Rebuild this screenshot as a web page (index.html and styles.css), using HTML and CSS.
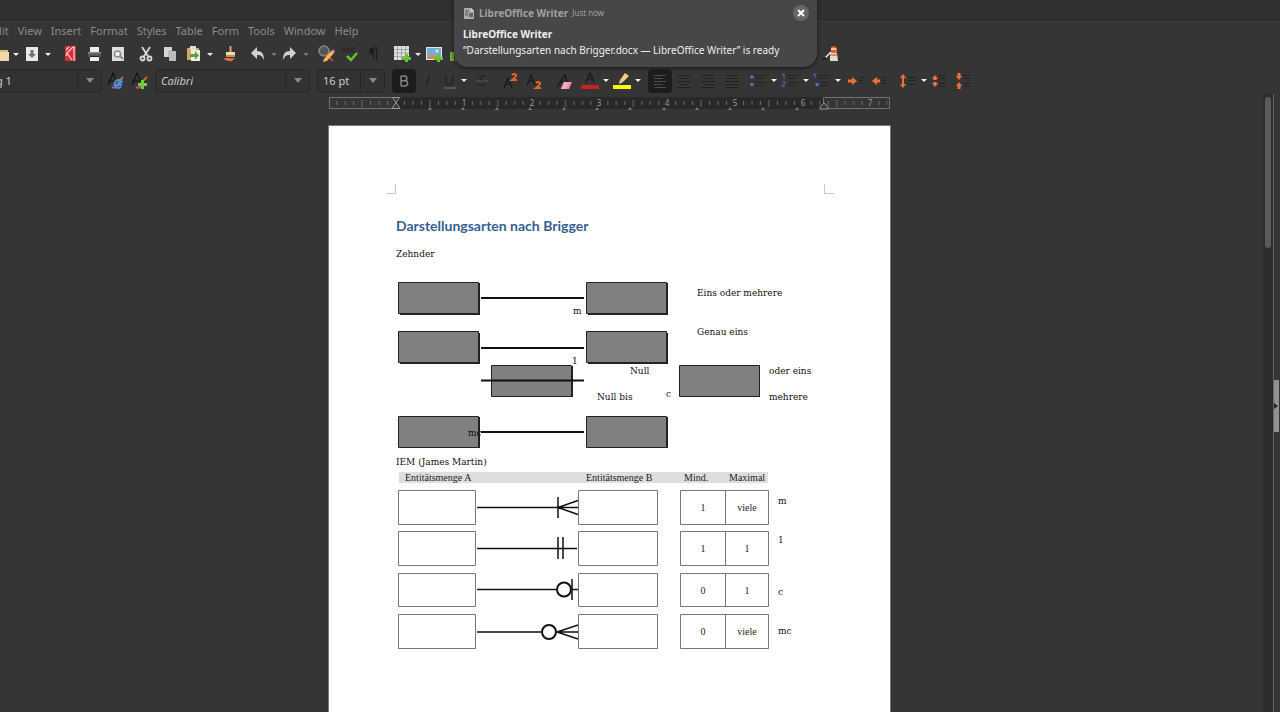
FILE: index.html
```html
<!DOCTYPE html>
<html lang="en">
<head>
<meta charset="utf-8">
<title>Darstellungsarten nach Brigger.docx — LibreOffice Writer</title>
<link rel="stylesheet" href="styles.css">
</head>
<body>
<header class="titlebar"></header>
<nav class="menubar" aria-label="Menu">
  <button>Edit</button><button>View</button><button>Insert</button><button>Format</button><button>Styles</button><button>Table</button><button>Form</button><button>Tools</button><button>Window</button><button>Help</button>
</nav>

<div class="toolbar standard" role="toolbar" aria-label="Standard">
  <button class="tool" aria-label="Open"><svg viewBox="0 0 18 18"><path d="M1 3h7l1 2h8v11H1z" fill="#d9b57c"/><path d="M1 7h17v9H1z" fill="#f4d9a8"/></svg></button>
  <button class="drop" aria-label="Open recent"></button>
  <button class="tool" aria-label="Save"><svg viewBox="0 0 18 18"><path d="M3 2h12v14H3z" fill="#e9e9e9"/><path d="M7.500 5h3v4h2.500L9 13 5 9h2.500z" fill="#707070"/></svg></button>
  <button class="drop" aria-label="Save options"></button>
  <i class="gap-large"></i>
  <button class="tool" aria-label="Export as PDF"><svg viewBox="0 0 18 18"><path d="M4 1h11v15H4z" fill="#d7303a"/><path d="M12 2 6 8l5 7M8 2 5 5M6 8l-1 3M13 1v15" fill="none" stroke="#f4d0d0" stroke-width="1.200"/></svg></button>
  <button class="tool" aria-label="Print"><svg viewBox="0 0 18 18"><path d="M5 2h9v5H5zM5 11h9v5H5z" fill="#ededed"/><path d="M3 7h13v5H3z" fill="#55585a"/><path d="M3 7h13v1.500H3z" fill="#858889"/><path d="M5 11h9v1H5z" fill="#202020"/></svg></button>
  <button class="tool" aria-label="Print preview"><svg viewBox="0 0 18 18"><path d="M3 2h12v14H3z" fill="#dedede"/><circle cx="8.500" cy="9" r="3" fill="#f1f1f1" stroke="#8a8a8a" stroke-width="1.500"/><path d="m11 11 3 3" stroke="#8a8a8a" stroke-width="2"/></svg></button>
  <i class="gap"></i>
  <button class="tool" aria-label="Cut"><svg viewBox="0 0 18 18" fill="none" stroke="#d8d8d8" stroke-width="1.800"><path d="m5 2 6.500 10M13 2 6.500 12"/><circle cx="5.500" cy="13.500" r="2"/><circle cx="12.500" cy="13.500" r="2"/></svg></button>
  <button class="tool" aria-label="Copy"><svg viewBox="0 0 18 18"><path d="M3 2h8v10H3z" fill="#d5d5d5"/><path d="M8 6h7v10H8z" fill="#bcbcbc"/><path d="M8 12V6h3" stroke="#aaa" fill="none"/></svg></button>
  <button class="tool" aria-label="Paste"><svg viewBox="0 0 18 18"><path d="M2 3h12v12H2z" fill="#d9a75c"/><path d="M5 1h6v4H5z" fill="#ddd"/><path d="M6 5h9v11H6z" fill="#ededeb"/><path d="M5 12V9h5V6l4 4.500-4 4V12z" fill="#56a532"/></svg></button>
  <button class="drop" aria-label="Paste options"></button>
  <i class="gap"></i>
  <button class="tool" aria-label="Clone formatting"><svg viewBox="0 0 18 18"><path d="M8.500 1h2v6h-2z" fill="#d7a960"/><path d="M5 7h9v4H5z" fill="#f4d9a8"/><path d="M5 10h9v2H5z" fill="#bb9360"/><path d="M2 14c4-2 7 0 12-1l-3 3c-3 1-6-1-9-2" fill="#e56b32"/></svg></button>
  <i class="gap"></i>
  <button class="tool" aria-label="Undo"><svg viewBox="0 0 18 18"><path d="m2 8 6-6v4c5 0 7 3 7 9-2-4-3-5-7-5v4z" fill="#d0d0d0"/></svg></button>
  <button class="drop dim" aria-label="Undo history"></button>
  <button class="tool" aria-label="Redo"><svg viewBox="0 0 18 18"><path d="m15 8-6-6v4c-5 0-7 3-7 9 2-4 3-5 7-5v4z" fill="#d0d0d0"/></svg></button>
  <button class="drop dim" aria-label="Redo history"></button>
  <i class="gap"></i>
  <button class="tool" aria-label="Find and replace"><svg viewBox="0 0 18 18"><circle cx="7" cy="6" r="5" fill="#555" stroke="#878787" stroke-width="1.500"/><path d="m10 10 6 6" stroke="#c44" stroke-width="2"/><path d="m7 14 7-8 3 2-7 8-4 1z" fill="#f0bd55"/><path d="m14 6 2-1.500 2 2L17 8z" fill="#f28ba5"/></svg></button>
  <button class="tool" aria-label="Spelling"><svg viewBox="0 0 18 18"><path d="M2 7V4l1.500-1L5 4v3M2 5.500h3M7 3v4h3V3zM12 3h3M12 7h3M12 3v4" fill="none" stroke="#262626"/><path d="m6 11 4 4 6-7" fill="none" stroke="#5fc52c" stroke-width="2.500"/></svg></button>
  <button class="tool" aria-label="Formatting marks"><svg viewBox="0 0 18 18"><path d="M8 3H7a3 3 0 0 0 0 6h1z" fill="#1d1d1d"/><path d="M7 3h7M8.500 3v12M11.500 3v12" stroke="#1d1d1d" stroke-width="1.200"/></svg></button>
  <i class="gap"></i>
  <button class="tool" aria-label="Insert table"><svg viewBox="0 0 18 18"><path d="M1 1h15v14H1z" fill="#e2e2e2"/><path d="M1 4.500h15M1 8h15M1 11.500h15M4.500 1v14M8.500 1v14M12.500 1v14" stroke="#999" stroke-width=".8"/><path d="M12 9h3v3h3v3h-3v2h-3v-2h-3v-3h3z" fill="#67c431"/></svg></button>
  <button class="drop" aria-label="Table size"></button>
  <button class="tool" aria-label="Insert image"><svg viewBox="0 0 18 18"><path d="M1 2h16v13H1z" fill="#e6e6e6"/><path d="M2 3h14v11H2z" fill="#73aede"/><path d="m2 14 5-5 3 3 2-2 4 4z" fill="#e98338"/><circle cx="12" cy="6" r="1.500" fill="#ffe88e"/><path d="M12 9h3v3h3v3h-3v2h-3v-2h-3v-3h3z" fill="#67c431"/></svg></button>
  <button class="tool" aria-label="Insert chart"><svg viewBox="0 0 18 18"><path d="M1 7h4v9H1z" fill="#67b52f"/><path d="M6 3h4v13H6z" fill="#de6b31"/><path d="M11 8h4v8h-4z" fill="#4a83c4"/></svg></button>
  <div class="covered-tools"></div>
  <button class="tool" aria-label="Draw functions"><svg viewBox="0 0 18 18"><path d="m8 2 3-1 3 2v5H8z" fill="#e7652d"/><path d="M8 3h5v2H8z" fill="#f5c6a5"/><path d="M7 8h7l1 8H7z" fill="#ddd"/><path d="M7 9h7v2H7z" fill="#e98853"/><path d="m1 14 7-7" stroke="#eee" stroke-width="1.500"/><path d="m0 14 3-1" stroke="#111" stroke-width="2"/></svg></button>
</div>

<div class="toolbar formatting" role="toolbar" aria-label="Formatting">
  <div class="combo style-combo"><input aria-label="Paragraph style" value="Heading 1"><button aria-label="Show styles"></button></div>
  <i class="gap-small"></i>
  <button class="tool" aria-label="Update style"><svg viewBox="0 0 18 18"><path d="M1 13 6 1l4 9M3 9h5" fill="none" stroke="#111" stroke-width="1.200"/><path d="m10 12 6-7" stroke="#c46b2b" stroke-width="2"/><path d="M5 15q3 2 5-1" stroke="#c44f8a" stroke-width="2" fill="none"/><path d="M14 15a4 4 0 1 1 1-5l-5 3h5" fill="none" stroke="#4b91e5" stroke-width="2"/></svg></button>
  <button class="tool" aria-label="New style"><svg viewBox="0 0 18 18"><path d="M1 13 6 1l4 9M3 9h5" fill="none" stroke="#111" stroke-width="1.200"/><path d="m10 11 6-6" stroke="#c46b2b" stroke-width="2"/><path d="M5 15q3 2 5-1" stroke="#c44f8a" stroke-width="2" fill="none"/><path d="M10 8h3v3h3v3h-3v3h-3v-3H7v-3h3z" fill="#72cf36"/></svg></button>
  <div class="combo font-combo"><input aria-label="Font name" value="Calibri"><button aria-label="Show fonts"></button></div>
  <div class="combo size-combo"><input aria-label="Font size" value="16 pt"><button aria-label="Show sizes"></button></div>
  <button class="tool active" aria-label="Bold"><svg viewBox="0 0 18 18" fill="none" stroke="#858585" stroke-width="1.500"><path d="M6 4v10M6 4h3.500a2.300 2.300 0 0 1 0 4.700H6h4a2.600 2.600 0 0 1 0 5.300H6"/></svg></button>
  <button class="tool" aria-label="Italic"><svg viewBox="0 0 18 18"><path d="M10.500 4 7 14" stroke="#222" stroke-width="1.200"/></svg></button>
  <button class="tool narrow" aria-label="Underline"><svg viewBox="0 0 18 18" fill="none" stroke="#222" stroke-width="1.300"><path d="M5 3v6a3.500 3.500 0 0 0 7 0V3"/><path d="M3 16h12" stroke="#666"/></svg></button>
  <button class="drop" aria-label="Underline options"></button>
  <i class="gap-small"></i>
  <button class="tool" aria-label="Strikethrough"><svg viewBox="0 0 18 18" fill="none" stroke="#222" stroke-width="1.200"><path d="M12 5C9 2 5 5 8 8l2 1c4 3-1 6-4 3"/><path d="M3 9h12" stroke="#555"/></svg></button>
  <i class="gap"></i>
  <button class="tool" aria-label="Superscript"><svg viewBox="0 0 18 18" fill="none"><path d="m3 16 4-10 4 10M5 12h5" stroke="#181818" stroke-width="1.200"/><path d="M11 3q2-2 4 0 0 2-4 5h5" stroke="#ec642b" stroke-width="2"/></svg></button>
  <button class="tool" aria-label="Subscript"><svg viewBox="0 0 18 18" fill="none"><path d="m2 13 4-10 4 10M4 9h5" stroke="#181818" stroke-width="1.200"/><path d="M11 11q2-2 4 0 0 2-4 5h5" stroke="#ec642b" stroke-width="2"/></svg></button>
  <i class="gap-large"></i>
  <button class="tool" aria-label="Clear formatting"><svg viewBox="0 0 18 18"><path d="m2 15 8-12 2 7M5 10h6" fill="none" stroke="#161616" stroke-width="1.200"/><path d="M9 10h8l-3 7H6z" fill="#f08bac"/><path d="m9 10-3 7h5l3-7z" fill="#f6abc2"/></svg></button>
  <i class="gap-small"></i>
  <button class="tool" aria-label="Font color"><svg viewBox="0 0 18 18"><path d="m5 10 4-9 4 9M6.500 7h5" fill="none" stroke="#181818" stroke-width="1.200"/><path d="M0 13h18v4H0z" fill="#c9211e"/></svg></button>
  <button class="drop" aria-label="Font colors"></button>
  <button class="tool" aria-label="Highlighting"><svg viewBox="0 0 18 18"><path d="m7 8 5-7 4 3-6 6z" fill="#f1ce78"/><path d="m7 8 3 2-4 2z" fill="#ddd"/><path d="M0 13h18v4H0z" fill="#fff800"/></svg></button>
  <button class="drop" aria-label="Highlight colors"></button>
  <i class="gap-large"></i>
  <button class="tool active" aria-label="Align left"><svg viewBox="0 0 18 18"><path d="M3 3.500h12M3 6.500h9M3 9.500h12M3 12.500h9M3 15.500h12" stroke="#4c4c4c"/></svg></button>
  <button class="tool" aria-label="Center"><svg viewBox="0 0 18 18"><path d="M2 3.500h14M5 6.500h8M2 9.500h14M5 12.500h8M2 15.500h14" stroke="#222"/></svg></button>
  <button class="tool" aria-label="Align right"><svg viewBox="0 0 18 18"><path d="M2 3.500h14M6 6.500h10M2 9.500h14M6 12.500h10M2 15.500h14" stroke="#222"/></svg></button>
  <button class="tool" aria-label="Justify"><svg viewBox="0 0 18 18"><path d="M2 3.500h14M2 6.500h14M2 9.500h14M2 12.500h14M2 15.500h14" stroke="#222"/></svg></button>
  <i class="gap-small"></i>
  <button class="tool" aria-label="Bullets"><svg viewBox="0 0 18 18"><path d="M7 3.500h10M7 6.500h7M7 10.500h10M7 13.500h7" stroke="#222"/><g fill="#4a78d0"><circle cx="3" cy="5" r="1.700"/><circle cx="3" cy="12.500" r="1.700"/></g></svg></button>
  <button class="drop" aria-label="Bullet styles"></button>
  <button class="tool" aria-label="Numbering"><svg viewBox="0 0 18 18" fill="none"><path d="M7 3.500h10M7 6.500h7M7 10.500h10M7 13.500h7" stroke="#222"/><path d="m1 3 2-1v5M1 10q2-1 3 0 0 2-3 4h3" stroke="#4068ae" stroke-width="1.200"/></svg></button>
  <button class="drop" aria-label="Number styles"></button>
  <button class="tool" aria-label="Outline"><svg viewBox="0 0 18 18" fill="none"><path d="M5 3.500h11M5 6.500h7M8 10.500h8M8 13.500h6" stroke="#222"/><path d="m0 3 2-1v4" stroke="#4068ae" stroke-width="1.200"/><circle cx="4" cy="12.500" r="1.700" fill="#4a78d0"/></svg></button>
  <button class="drop" aria-label="Outline styles"></button>
  <i class="gap-small"></i>
  <button class="tool" aria-label="Increase indent"><svg viewBox="0 0 18 18"><path d="M1 7.500h4V5l5 4-5 4v-2.500H1z" fill="#ef7136"/><path d="M12 5.500h5M12 8.500h4M12 11.500h4" stroke="#222"/></svg></button>
  <button class="tool" aria-label="Decrease indent"><svg viewBox="0 0 18 18"><path d="M9 7.500H6V5L1 9l5 4v-2.500h3z" fill="#ef7136"/><path d="M11 5.500h5M11 8.500h4M11 11.500h4" stroke="#222"/></svg></button>
  <i class="gap"></i>
  <button class="tool" aria-label="Line spacing"><svg viewBox="0 0 18 18"><path d="m4 2 3 4H5v6h2l-3 4-3-4h2V6H1z" fill="#ef7136"/><path d="M9 5.500h8M9 8.500h8M9 12.500h8" stroke="#222"/></svg></button>
  <button class="drop" aria-label="Line spacing options"></button>
  <button class="tool" aria-label="Increase paragraph spacing"><svg viewBox="0 0 18 18"><path d="m4 3 3 4H5.500v1h-3V7H1zM4 15l3-4H5.500v-1h-3v1H1z" fill="#ef7136"/><path d="M8 3.500h7M8 6.500h7M8 11.500h7M8 14.500h7" stroke="#222"/></svg></button>
  <button class="tool" aria-label="Decrease paragraph spacing"><svg viewBox="0 0 18 18"><path d="m4 8 3-4H5.500V1h-3v3H1zM4 10l3 4H5.500v3h-3v-3H1z" fill="#ef7136"/><path d="M9 3.500h7M9 6.500h7M9 11.500h7M9 14.500h7" stroke="#222"/></svg></button>
</div>

<div class="workspace">
  <main class="canvas">
    <svg class="ruler" width="562" height="14" viewBox="0 0 562 14" aria-label="Ruler">
      <defs><pattern id="inch" x="67" width="67.800" height="14" patternUnits="userSpaceOnUse"><path d="M8.500 4v4M17 4v4M25.400 4v4M33.900 3v7M42.400 4v4M50.900 4v4M59.300 4v4" stroke="#6b6b6b"/></pattern></defs>
      <path d="M67 0h428v12H67z" fill="#292929"/>
      <path d="M.5.500h66v11H.500zM494.500.5h66v11h-66z" fill="none" stroke="#707070"/>
      <path d="M2 0h557v12H2z" fill="url(#inch)"/>
      <path d="M63.500.5h7l-3.500 5 4 6h-8l4-6zM495 6l4 4v2h-8v-2z" fill="#363636" stroke="#999"/>
      <g fill="#777"><path id="tab" d="m101 10 2 3h-4z"/><use href="#tab" x="33"/><use href="#tab" x="67"/><use href="#tab" x="100"/><use href="#tab" x="134"/><use href="#tab" x="167"/><use href="#tab" x="200"/><use href="#tab" x="234"/><use href="#tab" x="267"/><use href="#tab" x="300"/><use href="#tab" x="333"/><use href="#tab" x="367"/></g>
      <g class="ruler-number"><text x="135" y="9">1</text><text x="203" y="9">2</text><text x="270" y="9">3</text><text x="338" y="9">4</text><text x="406" y="9">5</text><text x="474" y="9">6</text><text x="541" y="9">7</text></g>
    </svg>
    <article class="page" lang="de">
      <div class="corners"><i></i><i></i></div>
      <h1>Darstellungsarten nach Brigger</h1>
      <p>Zehnder</p>
      <svg class="figure" viewBox="0 0 428 192">
        <g fill="#222"><path d="M4 21h80v32H4zM192 21h80v32H192zM4 71h80v31H4zM192 71h80v31H192zM96 104h81v31H96zM284 104h80v31H284zM4 155h80v31H4zM192 155h80v31H192z"/></g>
        <g fill="#808080" stroke="#222"><path d="M2.500 20.500h80v31h-80zM190.500 20.500h80v31h-80zM2.500 69.500h80v31h-80zM190.500 69.500h80v31h-80zM95.500 103.500h80v31h-80zM283.500 103.500h80v31h-80zM2.500 154.500h80v31h-80zM190.500 154.500h80v31h-80z"/></g>
        <path d="M85 36h103M85 86h103M85 118.500h103M85 170h103" stroke="#111" stroke-width="2"/>
        <text x="177" y="52">m</text><text x="176" y="102">1</text>
        <text x="301" y="34">Eins oder mehrere</text><text x="301" y="73">Genau eins</text>
        <text x="234" y="112">Null</text><text x="373" y="112">oder eins</text>
        <text x="201" y="138">Null bis</text><text x="270" y="135">c</text><text x="373" y="138">mehrere</text>
        <clipPath id="label-box"><path d="M70 160h15v20H70z"/></clipPath>
        <text x="72" y="174" clip-path="url(#label-box)">mc</text>
      </svg>
      <p>IEM (James Martin)</p>
      <svg class="figure" viewBox="0 0 428 192">
        <path d="M3 2h369v11H3z" fill="#dedede"/>
        <path d="M2.500 20.500h77v34h-77zM182.500 20.500h79v34h-79zM284.500 20.500h88v34h-88zM329.500 20.500v34M2.500 61.500h77v34h-77zM182.500 61.500h79v34h-79zM284.500 61.500h88v34h-88zM329.500 61.500v34M2.500 103.500h77v33h-77zM182.500 103.500h79v33h-79zM284.500 103.500h88v33h-88zM329.500 103.500v33M2.500 144.500h77v34h-77zM182.500 144.500h79v34h-79zM284.500 144.500h88v34h-88zM329.500 144.500v34" fill="none" stroke="#777"/>
        <g fill="none" stroke="#111" stroke-width="1.500"><path d="M81 37.500h101M162 27v21M182 30.500l-20 7 20 7M81 78.500h100M162 67v22M167 67v22M81 119.500h79M176 109v21M176 119.500h6M81 162h64M182 155l-21 7 21 7M161 162h21"/><circle cx="168" cy="119.500" r="7" stroke-width="2"/><circle cx="153" cy="162" r="7" stroke-width="2"/></g>
        <g class="small"><text x="9" y="11">Entitätsmenge A</text><text x="190" y="11">Entitätsmenge B</text><text x="288" y="11">Mind.</text><text x="333" y="11">Maximal</text></g>
        <g class="small centered"><text x="307" y="41">1</text><text x="351" y="41">viele</text><text x="307" y="82">1</text><text x="351" y="82">1</text><text x="307" y="124">0</text><text x="351" y="124">1</text><text x="307" y="165">0</text><text x="351" y="165">viele</text></g>
        <text x="382" y="34">m</text><text x="382" y="73">1</text><text x="382" y="125">c</text><text x="382" y="164">mc</text>
      </svg>
    </article>
  </main>
  <div class="scrollbar"><div class="thumb"></div></div>
  <aside class="sidebar-edge"><button aria-label="Show sidebar"></button></aside>
</div>

<section class="notification" role="status">
  <div class="notice-head">
    <svg width="12" height="12" viewBox="0 0 12 12"><path d="M1 1h7l3 3v8H1z" fill="#aaa"/><path d="M8 1v3h3" fill="#ddd"/><path d="M2 4h4M2 6h3M2 8h3" stroke="#555"/><path d="M6 6h4v4H6z" fill="#666"/></svg>
    <strong>LibreOffice Writer</strong><time>Just now</time>
    <button aria-label="Close"><svg width="8" height="8" viewBox="0 0 8 8"><path d="m1 1 6 6M7 1 1 7" stroke="#fff" stroke-width="2"/></svg></button>
  </div>
  <h2>LibreOffice Writer</h2>
  <p>“Darstellungsarten nach Brigger.docx — LibreOffice Writer” is ready</p>
</section>
</body>
</html>
```

FILE: styles.css
```css
* { box-sizing: border-box; }
body {
  margin: 0;
  height: 100vh;
  display: flex;
  flex-direction: column;
  overflow: hidden;
  position: relative;
  background: #353535;
  color: #ccc;
  font: 11px/16px "Noto Sans", sans-serif;
}
button, input { font: inherit; color: inherit; border: 0; padding: 0; margin: 0; background: none; }
.titlebar { flex: none; height: 20px; background: #303030; border-bottom: 1px solid #292929; }
.menubar { flex: none; display: flex; gap: 9px; height: 21px; margin-left: -11px; color: #8b8b8b; }

.toolbar { flex: none; display: flex; align-items: center; white-space: nowrap; }
.toolbar > * { flex: none; }
.standard { height: 26px; margin-left: -12px; }
.formatting { height: 27px; margin-left: -58px; }
.tool { width: 24px; height: 24px; display: flex; align-items: center; justify-content: center; border-radius: 4px; }
.tool svg { width: 18px; height: 18px; }
.narrow { width: 20px; }
.active { background: #1d1d1d; }
.drop { width: 8px; height: 24px; display: flex; align-items: center; justify-content: center; }
.drop::after { content: ""; border: 3px solid transparent; border-top-color: #eee; border-bottom: 0; }
.drop.dim::after { border-top-color: #777; }
.gap-small { width: 2px; }
.gap { width: 4px; }
.gap-large { width: 6px; }
.covered-tools { width: 350px; }
.combo { display: flex; height: 24px; border: 1px solid #282828; border-radius: 4px; background: #323232; overflow: hidden; }
.combo input { flex: 1; min-width: 0; padding-left: 5px; }
.combo button { width: 24px; border-left: 1px solid #282828; display: flex; align-items: center; justify-content: center; }
.combo button::after { content: ""; border: 4px solid transparent; border-top: 5px solid #888; border-bottom: 0; }
.style-combo { width: 160px; }
.style-combo input { padding-left: 16px; }
.font-combo { width: 155px; margin: 0 7px 0 3px; font-style: italic; }
.size-combo { width: 68px; margin-right: 7px; }

.workspace { flex: 1; min-height: 0; display: flex; overflow: hidden; }
.canvas { flex: 1; min-width: 0; display: flex; flex-direction: column; align-items: center; padding: 3px 44px 0 0; overflow: hidden; }
.ruler { flex: none; margin-bottom: 14px; }
.ruler-number { font: 8px "Noto Sans", sans-serif; fill: #999; text-anchor: middle; }
.page { flex: none; width: 563px; min-height: 640px; padding: 58px 66px 0 67px; background: #fff; color: #111; border: 1px solid #777; font: 10px/16px "DejaVu Serif Condensed", "DejaVu Serif", serif; }
.corners { display: flex; justify-content: space-between; margin: 0 -10px; }
.corners i { width: 10px; height: 10px; border: solid #c8c8c8; border-width: 0 1px 1px 0; }
.corners i:last-child { border-width: 0 0 1px 1px; }
.page h1 { margin: 22px 0 10px; font: bold 14px/20px Lato, sans-serif; color: #365f91; }
.page p { margin: 0; }
.figure { display: block; width: 100%; overflow: visible; fill: #111; }
.small { font: 10px "Liberation Serif", serif; fill: #222; }
.centered { text-anchor: middle; }

.scrollbar { flex: none; width: 10px; padding: 3px 2px 0; background: #2d2d2d; }
.thumb { height: 151px; border-radius: 3px; background: #5c5b59; }
.sidebar-edge { flex: none; width: 7px; padding-top: 6px; border-left: 1px solid #666; display: flex; align-items: center; }
.sidebar-edge button { width: 5px; height: 52px; background: #929292; display: flex; align-items: center; }
.sidebar-edge button::after { content: ""; border: 3px solid transparent; border-left: 4px solid #222; border-right: 0; }

.notification { position: absolute; top: 0; left: 50%; margin-left: -186px; width: 363px; height: 67px; padding: 4px 8px 0 9px; border-radius: 0 0 14px 14px; background: #474747; color: #eee; font-size: 10px; box-shadow: 0 1px 4px #181818; }
.notice-head { display: flex; align-items: center; gap: 4px; height: 18px; color: #a0a0a0; }
.notice-head time { font-size: 8px; }
.notice-head button { width: 16px; height: 16px; margin-left: auto; border-radius: 8px; background: #666; display: flex; align-items: center; justify-content: center; }
.notification h2 { margin: 4px 0 0; font-size: 10px; line-height: 16px; }
.notification p { margin: 0; white-space: nowrap; }
```
